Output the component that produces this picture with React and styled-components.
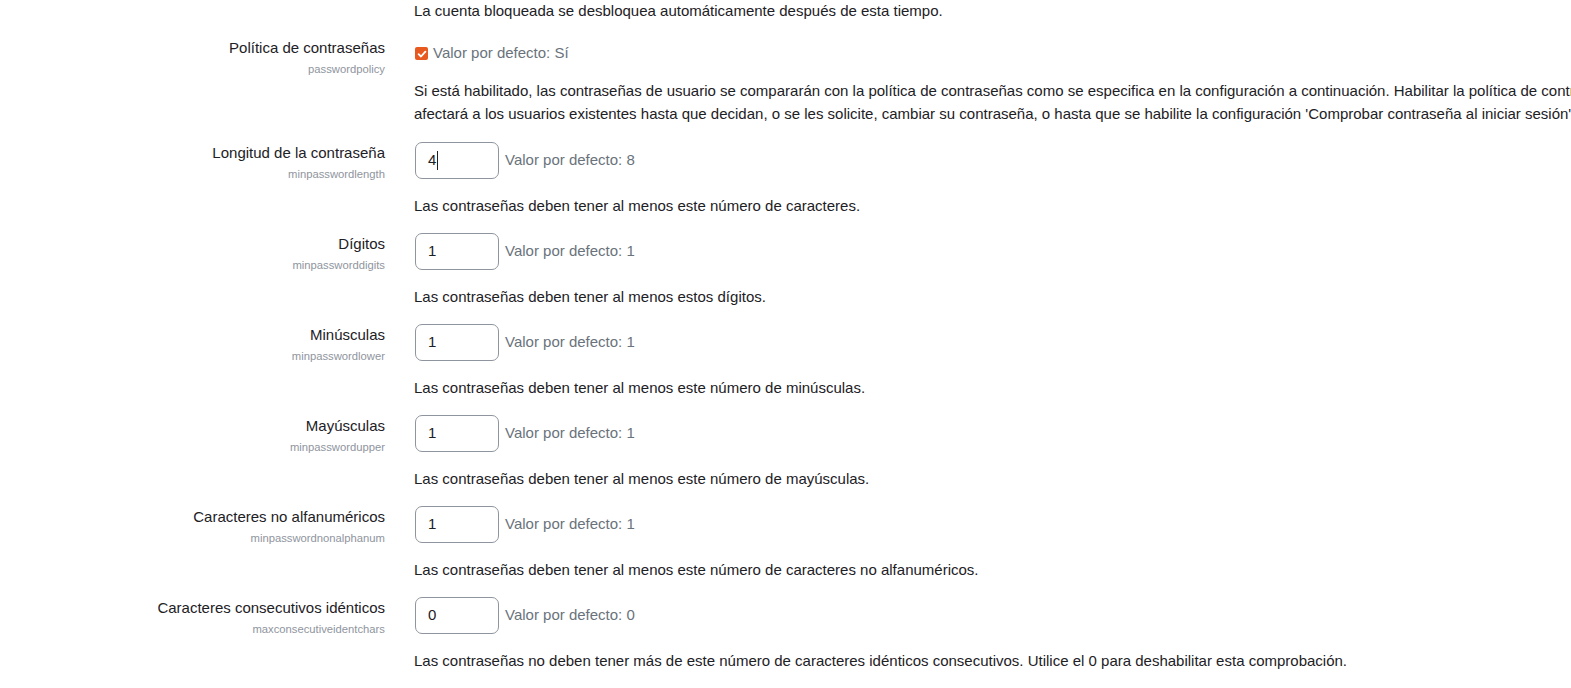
import React from 'react'
import styled, { createGlobalStyle } from 'styled-components'

const GlobalStyle = createGlobalStyle`
  html, body {
    margin: 0;
    padding: 0;
    background: #fff;
    overflow: hidden;
  }
  body {
    font-family: "Liberation Sans", Arial, sans-serif;
    font-size: 15px;
    line-height: 1.5;
    color: #1d2125;
  }
`

const Page = styled.div`
  width: 1700px;
  margin-top: -0.5px;
`

const Row = styled.div`
  display: grid;
  grid-template-columns: 385px 1250px;
  column-gap: 29px;
  margin-bottom: ${p => p.$bottom || 16}px;
`

const LabelCol = styled.div`
  text-align: right;
`

const Label = styled.div`
  font-size: 15px;
  line-height: 22.5px;
`

const ShortName = styled.div`
  font-size: 11.25px;
  line-height: 16.875px;
  color: #8f959e;
  margin-top: 1px;
`

const SettingCol = styled.div`
  display: flex;
  flex-direction: column;
`

const Controls = styled.div`
  display: flex;
  align-items: center;
  gap: 6px;
  min-height: ${p => p.$h || 36}px;
`

const NumberBox = styled.div`
  box-sizing: border-box;
  width: 84px;
  height: 36.5px;
  margin-left: 1px;
  border: 1px solid #8f959e;
  border-radius: 7px;
  padding: 0 12px;
  display: flex;
  align-items: center;
  font-size: 15px;
  color: #1d2125;
`

const Caret = styled.span`
  display: inline-block;
  width: 1px;
  height: 19px;
  background: #1d2125;
  margin-left: 1px;
`

const Default = styled.span`
  color: #6a737b;
  font-size: 15px;
`

const CheckBox = styled.span`
  width: 13px;
  height: 13px;
  border-radius: 2px;
  background: #e8591f;
  display: inline-flex;
  align-items: center;
  justify-content: center;
  margin-left: 1px;
  margin-right: -1px;
  flex-shrink: 0;
`

const Description = styled.div`
  margin-top: ${p => p.$top || 16}px;
  font-size: 15px;
  line-height: 22.5px;
  white-space: ${p => (p.$wrap ? 'normal' : 'nowrap')};
`

const TopLine = styled.div`
  padding-left: 414px;
  line-height: 22.5px;
  margin-bottom: 15px;
`

const numberSettings = [
  {
    label: 'Longitud de la contraseña',
    name: 'minpasswordlength',
    value: '4',
    def: '8',
    caret: true,
    desc: 'Las contraseñas deben tener al menos este número de caracteres.',
  },
  {
    label: 'Dígitos',
    name: 'minpassworddigits',
    value: '1',
    def: '1',
    desc: 'Las contraseñas deben tener al menos estos dígitos.',
  },
  {
    label: 'Minúsculas',
    name: 'minpasswordlower',
    value: '1',
    def: '1',
    desc: 'Las contraseñas deben tener al menos este número de minúsculas.',
  },
  {
    label: 'Mayúsculas',
    name: 'minpasswordupper',
    value: '1',
    def: '1',
    desc: 'Las contraseñas deben tener al menos este número de mayúsculas.',
  },
  {
    label: 'Caracteres no alfanuméricos',
    name: 'minpasswordnonalphanum',
    value: '1',
    def: '1',
    desc: 'Las contraseñas deben tener al menos este número de caracteres no alfanuméricos.',
  },
  {
    label: 'Caracteres consecutivos idénticos',
    name: 'maxconsecutiveidentchars',
    value: '0',
    def: '0',
    desc: 'Las contraseñas no deben tener más de este número de caracteres idénticos consecutivos. Utilice el 0 para deshabilitar esta comprobación.',
  },
]

const NumberSetting = ({ item }) => (
  <Row>
    <LabelCol>
      <Label>{item.label}</Label>
      <ShortName>{item.name}</ShortName>
    </LabelCol>
    <SettingCol>
      <Controls>
        <NumberBox>
          {item.value}
          {item.caret && <Caret />}
        </NumberBox>
        <Default>Valor por defecto: {item.def}</Default>
      </Controls>
      <Description>{item.desc}</Description>
    </SettingCol>
  </Row>
)

const App = () => {
  return (
    <Page>
      <GlobalStyle />
      <TopLine>La cuenta bloqueada se desbloquea automáticamente después de esta tiempo.</TopLine>
      <Row $bottom={17}>
        <LabelCol>
          <Label>Política de contraseñas</Label>
          <ShortName>passwordpolicy</ShortName>
        </LabelCol>
        <SettingCol>
          <Controls $h={33}>
            <CheckBox>
              <svg width="10" height="10" viewBox="0 0 10 10">
                <path d="M1.6 5.2 L4 7.5 L8.4 2.6" fill="none" stroke="#fff" strokeWidth="1.8" strokeLinecap="round" strokeLinejoin="round" />
              </svg>
            </CheckBox>
            <Default>Valor por defecto: Sí</Default>
          </Controls>
          <Description $top={10} $wrap>
            Si está habilitado, las contraseñas de usuario se compararán con la política de contraseñas como se especifica en la configuración a continuación. Habilitar la política de contraseñas no afectará a los usuarios existentes hasta que decidan, o se les solicite, cambiar su contraseña, o hasta que se habilite la configuración 'Comprobar contraseña al iniciar sesión'.
          </Description>
        </SettingCol>
      </Row>
      {numberSettings.map(item => (
        <NumberSetting key={item.name} item={item} />
      ))}
    </Page>
  )
}

export default App
